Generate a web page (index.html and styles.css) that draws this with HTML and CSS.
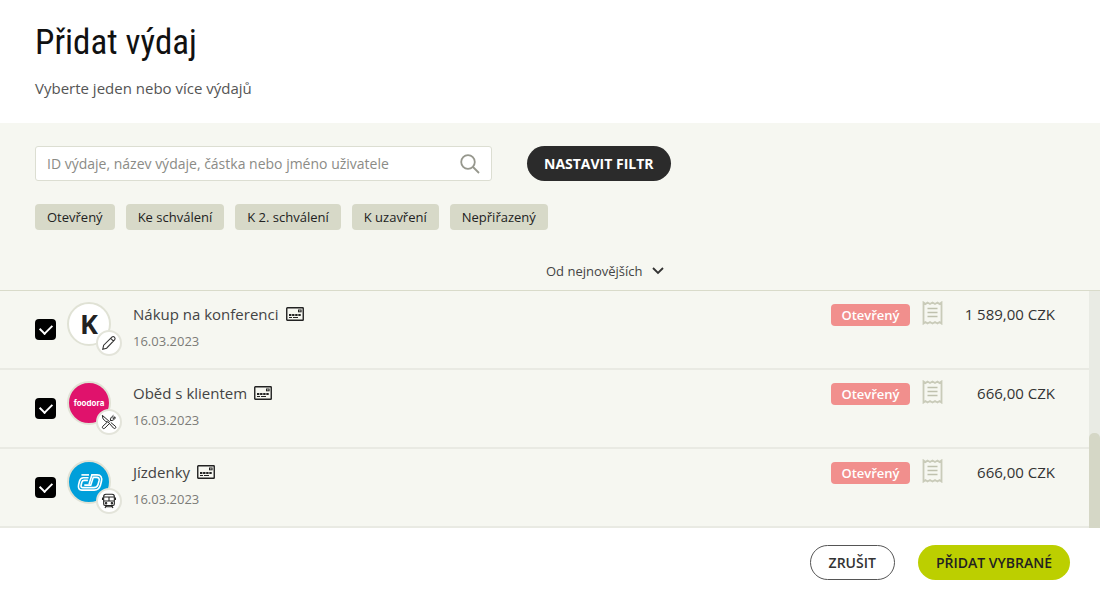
FILE: index.html
```html
<!DOCTYPE html>
<html lang="cs">
<head>
    <meta charset="UTF-8">
    <meta name="viewport" content="width=device-width, initial-scale=1.0">
    <title>Přidat výdaj</title>
    <link rel="stylesheet" href="styles.css">
</head>
<body>
    <!-- Shared icons -->
    <svg class="sprite" aria-hidden="true">
        <symbol id="icon-card" viewBox="0 0 18 14">
            <rect x="0.75" y="0.75" width="16.5" height="12.5" rx="0.6" fill="none" stroke="#222" stroke-width="1.4"/>
            <rect x="12.5" y="3" width="2.6" height="1.8" fill="none" stroke="#222"/>
            <path d="M3 8h12" stroke="#222" stroke-width="1.8" stroke-dasharray="2.4 0.7"/>
            <path d="M3 10.5h3M7 10.5h5" stroke="#222"/>
        </symbol>
        <symbol id="icon-receipt" viewBox="0 0 21 24">
            <path d="M1.5 1.5l2 1.5 2-1.5 2.5 1.5 2.5-1.5L13 3l2.5-1.5 2 1.5 2-1.5v21l-2-1.5-2 1.5L13 21l-2.5 1.5L8 21l-2.5 1.5-2-1.5-2 1.5z" fill="none" stroke="#c9cbb9" stroke-width="1.8"/>
            <path d="M5.5 7.5h10M5.5 11.5h10M5.5 15.5h10" stroke="#bfc1ae" stroke-width="1.5"/>
        </symbol>
    </svg>

    <header class="header">
        <h1>Přidat výdaj</h1>
        <p>Vyberte jeden nebo více výdajů</p>
    </header>

    <main class="content">
        <!-- Search and filters -->
        <section class="filters">
            <div class="search-row">
                <div class="search">
                    <input type="text" aria-label="Hledat výdaj" placeholder="ID výdaje, název výdaje, částka nebo jméno uživatele">
                    <svg width="20" height="20" viewBox="0 0 20 20" fill="none" stroke="#96978d" stroke-width="1.8">
                        <circle cx="8" cy="8" r="6.8"/>
                        <path d="M13 13l6 6"/>
                    </svg>
                </div>
                <button class="btn btn-dark" type="button">NASTAVIT FILTR</button>
            </div>
            <div class="chips">
                <button class="chip" type="button">Otevřený</button>
                <button class="chip" type="button">Ke schválení</button>
                <button class="chip" type="button">K 2. schválení</button>
                <button class="chip" type="button">K uzavření</button>
                <button class="chip" type="button">Nepřiřazený</button>
            </div>
            <div class="sort">
                <select aria-label="Řazení">
                    <option>Od nejnovějších</option>
                </select>
                <svg width="12" height="8" viewBox="0 0 12 8" fill="none" stroke="#333" stroke-width="1.8">
                    <path d="M1 1l5 5 5-5"/>
                </svg>
            </div>
        </section>

        <!-- Expense list -->
        <section class="list">
            <ul class="rows">
                <li class="row">
                    <input class="check" type="checkbox" id="expense1" checked>
                    <div class="avatar">
                        <span class="avatar-letter">K</span>
                        <span class="badge">
                            <svg viewBox="0 0 18 18" fill="none" stroke="#333" stroke-width="1.2">
                                <path d="M2 16l1-4.5L12.5 2.2q1.3-1 2.6.3 1.4 1.4.4 2.8L6.3 14.8zM11 3.8l3 3"/>
                            </svg>
                        </span>
                    </div>
                    <div class="info">
                        <label for="expense1">Nákup na konferenci</label>
                        <svg width="18" height="14"><use href="#icon-card"/></svg>
                        <time datetime="2023-03-16">16.03.2023</time>
                    </div>
                    <span class="status">Otevřený</span>
                    <svg width="21" height="24"><use href="#icon-receipt"/></svg>
                    <span class="price">1 589,00 CZK</span>
                </li>
                <li class="row">
                    <input class="check" type="checkbox" id="expense2" checked>
                    <div class="avatar avatar-pink">
                        <span class="avatar-name">foodora</span>
                        <span class="badge">
                            <svg viewBox="0 0 18 18" fill="none" stroke="#222" stroke-width="1.1">
                                <path d="M1.5 1.5Q1 6 5.5 8.500L8 9 14 15.800q1.200 1 2.200.2t0-2.200L11 9.500M1.500 1.500L9.500 8.500"/>
                                <path d="M7 9.200L2 13.800q-1 1.200 0 2.200t2.200 0L9.200 11M9.500 8.500l1.200-1.300q-.7-2 1-3.600L14 1.500M10.700 7.200q2 .8 3.700-.9L16.800 4M15 2.500l-2.500 2.500M16 3.300l-2.500 2.500"/>
                            </svg>
                        </span>
                    </div>
                    <div class="info">
                        <label for="expense2">Oběd s klientem</label>
                        <svg width="18" height="14"><use href="#icon-card"/></svg>
                        <time datetime="2023-03-16">16.03.2023</time>
                    </div>
                    <span class="status">Otevřený</span>
                    <svg width="21" height="24"><use href="#icon-receipt"/></svg>
                    <span class="price">666,00 CZK</span>
                </li>
                <li class="row">
                    <input class="check" type="checkbox" id="expense3" checked>
                    <div class="avatar avatar-blue">
                        <svg width="27" height="19" viewBox="0 0 28 20" fill="none" stroke="#fff" stroke-width="1.7">
                            <path d="M5.5 2h8"/>
                            <path d="M13 5H7.5q-3 0-4 3.5l-1 4Q1.5 18 6 18h13q5 0 6.5-5l1-4Q28 2 22 2h-5.5l-3 10"/>
                            <path d="M12.3 7.8H8.5q-2 0-2.6 2l-.7 2.800q-.7 2.800 1.800 2.800h11.500q3.500 0 4.500-3.400l1-3.500q1-3.900-2.500-3.900H18l-2.700 8.200H8.500"/>
                        </svg>
                        <span class="badge">
                            <svg viewBox="0 0 18 18" fill="none" stroke="#222" stroke-width="1.2">
                                <path d="M5.5 1.5h7q2.500 0 2.500 2.500v8.500q0 1.500-1.500 1.500h-9Q3 14 3 12.500V4q0-2.500 2.500-2.500zM3 4.500h12M3 9h12M9 4.500V9M1.700 5v3M16.300 5v3M6 14l-1.500 3M12 14l1.500 3M5.300 15.500h7.400"/>
                                <circle cx="5.7" cy="11.5" r="0.8"/>
                                <circle cx="12.3" cy="11.5" r="0.8"/>
                            </svg>
                        </span>
                    </div>
                    <div class="info">
                        <label for="expense3">Jízdenky</label>
                        <svg width="18" height="14"><use href="#icon-card"/></svg>
                        <time datetime="2023-03-16">16.03.2023</time>
                    </div>
                    <span class="status">Otevřený</span>
                    <svg width="21" height="24"><use href="#icon-receipt"/></svg>
                    <span class="price">666,00 CZK</span>
                </li>
            </ul>
            <div class="scrollbar"><div class="thumb"></div></div>
        </section>
    </main>

    <footer class="footer">
        <button class="btn btn-outline" type="button">ZRUŠIT</button>
        <button class="btn btn-green" type="button">PŘIDAT VYBRANÉ</button>
    </footer>
</body>
</html>
```
FILE: styles.css
```css
* {
    box-sizing: border-box;
}

body {
    margin: 0;
    font-family: "Open Sans", "Noto Sans", sans-serif;
    font-size: 15px;
    color: #444;
    background: #fff;
}

.sprite {
    display: none;
}

/* Heading */
.header {
    padding: 20px 35px 24px;
}

h1 {
    margin: 0;
    font-family: "Roboto Condensed", Roboto, sans-serif;
    font-size: 35px;
    font-weight: 400;
    line-height: 46px;
    color: #111;
}

.header p {
    margin: 11px 0 0;
    line-height: 22px;
    color: #555;
}

.content {
    background: #f6f7f1;
}

/* Search and filters */
.filters {
    padding: 23px 35px 0;
    border-bottom: 1px solid #d9dbca;
}

.search-row {
    display: flex;
    gap: 35px;
}

.search {
    display: flex;
    align-items: center;
    flex: 0 1 457px;
    height: 35px;
    padding: 0 11px;
    background: #fff;
    border: 1px solid #dcded2;
    border-radius: 3px;
}

.search input {
    flex: 1;
    min-width: 0;
    padding: 0;
    border: none;
    outline: none;
    background: none;
    font: inherit;
    font-size: 14px;
}

.search input::placeholder {
    color: #8b8b86;
}

.btn {
    height: 35px;
    padding: 0 18px;
    border: none;
    border-radius: 18px;
    font-family: inherit;
    font-size: 14px;
    font-weight: 600;
    cursor: pointer;
}

.btn-dark {
    padding: 0 17px;
    background: #2b2b2b;
    color: #fff;
    font-weight: 700;
}

.chips {
    display: flex;
    flex-wrap: wrap;
    gap: 11px;
    margin-top: 23px;
}

.chip {
    height: 26px;
    padding: 0 12px;
    border: none;
    border-radius: 4px;
    background: #d7d9c8;
    color: #222;
    font-family: inherit;
    font-size: 13px;
}

.sort {
    display: flex;
    align-items: center;
    gap: 9px;
    margin: 31px 0 9px;
    padding-left: calc(50% - 4px);
}

.sort select {
    appearance: none;
    height: 20px;
    padding: 0;
    border: none;
    background: none;
    color: #444;
    font-family: inherit;
    font-size: 13px;
}

/* Expense list */
.list {
    display: flex;
}

.rows {
    flex: 1;
    margin: 0;
    padding: 0;
    list-style: none;
}

.row {
    display: flex;
    align-items: flex-start;
    height: 79px;
    padding: 10px 34px 0 35px;
    border-bottom: 2px solid #e9eae3;
}

.check {
    appearance: none;
    display: grid;
    place-items: center;
    width: 21px;
    height: 21px;
    margin: 18px 11px 0 0;
    border-radius: 4px;
    background: #000;
}

.check:checked::before {
    content: "";
    width: 10px;
    height: 6px;
    margin-bottom: 3px;
    border-left: 2px solid #fff;
    border-bottom: 2px solid #fff;
    transform: rotate(-45deg);
}

.avatar {
    position: relative;
    display: flex;
    align-items: center;
    justify-content: center;
    width: 44px;
    height: 44px;
    margin: 1px 22px 0 0;
    border: 2px solid #e0e2d5;
    border-radius: 50%;
    background: #fff;
}

.avatar-pink {
    background: #e0126c;
}

.avatar-blue {
    background: #009fda;
}

.avatar-letter {
    font-size: 27px;
    font-weight: 700;
    line-height: 38px;
    color: #222;
}

.avatar-name {
    font-family: Inter, sans-serif;
    font-size: 8px;
    font-weight: 700;
    color: #fff;
}

/* Category icon over the avatar */
.badge {
    position: absolute;
    right: -13px;
    bottom: -12px;
    display: flex;
    align-items: center;
    justify-content: center;
    width: 26px;
    height: 26px;
    border: 2px solid #e3e4da;
    border-radius: 50%;
    background: #fff;
}

.badge svg {
    flex: none;
    width: 16px;
    height: 16px;
}

.info {
    display: grid;
    grid-template-columns: auto 1fr;
    align-items: center;
    flex: 1;
    column-gap: 7px;
    row-gap: 5px;
    line-height: 22px;
    padding-top: 2px;
}

.info time {
    grid-column: 1 / 3;
    font-size: 13px;
    color: #7c7c78;
}

.status {
    width: 79px;
    margin: 3px 12px 0 0;
    border-radius: 4px;
    background: #f18f8d;
    color: #fff;
    font-size: 13px;
    font-weight: 600;
    line-height: 22px;
    text-align: center;
}

.price {
    width: 112px;
    padding-top: 2px;
    line-height: 22px;
    text-align: right;
    color: #333;
}

/* Scroll position */
.scrollbar {
    display: flex;
    align-items: flex-end;
    width: 11px;
    background: #e9ebe4;
}

.thumb {
    width: 100%;
    height: 40%;
    border-radius: 5px 5px 0 0;
    background: #d5d7c6;
}

/* Actions */
.footer {
    display: flex;
    justify-content: flex-end;
    gap: 23px;
    padding: 17px 30px 20px;
}

.btn-outline {
    border: 1px solid #555;
    background: #fff;
    color: #333;
}

.btn-green {
    background: #bccf00;
    color: #222;
}
```
